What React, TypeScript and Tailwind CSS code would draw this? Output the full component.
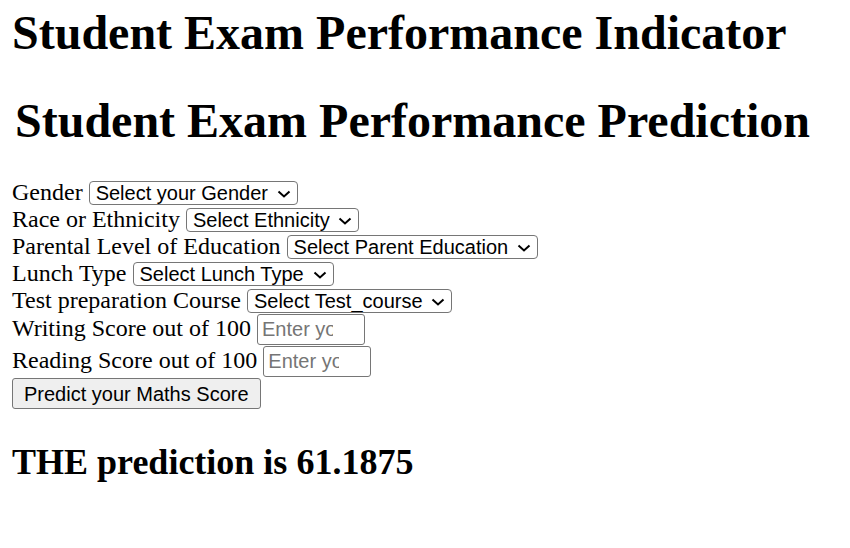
import React from "react";

const selects = [
  { label: "Gender", placeholder: "Select your Gender" },
  { label: "Race or Ethnicity", placeholder: "Select Ethnicity" },
  { label: "Parental Level of Education", placeholder: "Select Parent Education" },
  { label: "Lunch Type", placeholder: "Select Lunch Type" },
  { label: "Test preparation Course", placeholder: "Select Test_course" },
];

const scores = [
  { label: "Writing Score out of 100", placeholder: "Enter your Writing score" },
  { label: "Reading Score out of 100", placeholder: "Enter your Reading Score" },
];

function Chevron() {
  return (
    <svg
      width="14"
      height="8"
      viewBox="0 0 14 8"
      className="pointer-events-none absolute right-[7px] top-[9px]"
    >
      <path d="M1.5 1.5 L7 6.5 L12.5 1.5" fill="none" stroke="#000" strokeWidth="2" />
    </svg>
  );
}

function App() {
  return (
    <div className="min-h-screen bg-white px-[12px] text-black font-['Liberation_Serif',serif]">
      <h1 className="mt-[5px] text-[48px] leading-[56px] font-bold">
        Student Exam Performance Indicator
      </h1>
      <h1 className="mt-[32px] pl-[3px] text-[48px] leading-[56px] font-bold">
        Student Exam Performance Prediction
      </h1>

      <form className="mt-[31px] flex flex-col items-start">
        {selects.map((s) => (
          <div key={s.label} className="flex items-start gap-[6px] h-[27px]">
            <label className="text-[24px] leading-[25px]">{s.label}</label>
            <span className="relative mt-[1px] inline-flex">
              <select
                defaultValue=""
                className="appearance-none h-[24px] pl-[6px] pr-[28px] py-0 border border-[#767676] rounded-[4px] bg-white text-[20px] leading-[22px] font-['Liberation_Sans',Arial,sans-serif]"
              >
                <option value="" disabled>
                  {s.placeholder}
                </option>
              </select>
              <Chevron />
            </span>
          </div>
        ))}

        {scores.map((s, i) => (
          <div
            key={s.label}
            className={i === 0 ? "mt-[-1px] flex items-start gap-[6px] h-[32px]" : "flex items-start gap-[6px] h-[32px]"}
          >
            <label className="text-[24px] leading-[29px]">{s.label}</label>
            <input
              type="text"
              placeholder={s.placeholder}
              className="w-[108px] h-[31px] pl-[4px] pr-[31px] border border-[#767676] rounded-[3px] bg-white text-[20px] font-['Liberation_Sans',Arial,sans-serif] placeholder:text-[#757575]"
            />
          </div>
        ))}

        <button
          type="button"
          className="h-[31px] px-[11px] border border-[#767676] rounded-[3px] bg-[#efefef] text-[20px] leading-[22px] font-['Liberation_Sans',Arial,sans-serif]"
        >
          Predict your Maths Score
        </button>
      </form>

      <h2 className="mt-[32px] text-[36px] leading-[42px] font-bold">THE prediction is 61.1875</h2>
    </div>
  );
}

export default App;
